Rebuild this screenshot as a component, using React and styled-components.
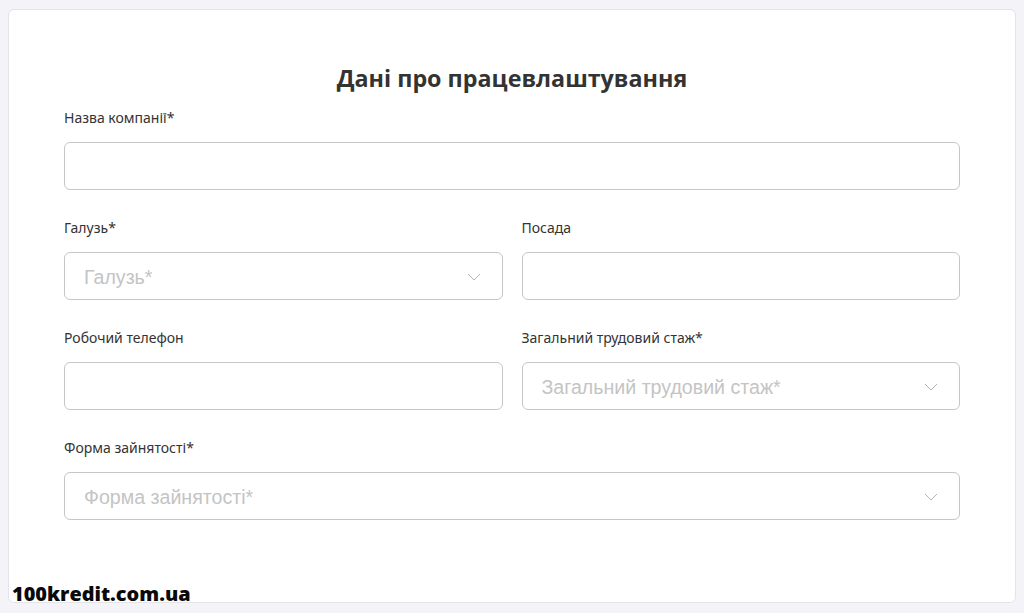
import React from "react";
import styled, { createGlobalStyle } from "styled-components";

const Global = createGlobalStyle`
  html, body { margin: 0; padding: 0; background: #f3f3f8; }
  * { box-sizing: border-box; }
`;

const Page = styled.div`
  position: relative;
  width: 1024px;
  height: 613px;
  padding: 9px 8px 10px 8px;
`;

const Card = styled.div`
  height: 594px;
  background: #ffffff;
  border: 1px solid #e3e3ea;
  border-radius: 6px;
  padding: 52px 55px 0 55px;
`;

const Title = styled.h2`
  margin: 0 0 14px 0;
  text-align: center;
  font-family: "Open Sans", "Noto Sans", sans-serif;
  font-weight: 700;
  font-size: 23.3px;
  line-height: 32px;
  color: #333333;
`;

const Grid = styled.div`
  display: grid;
  grid-template-columns: 1fr 1fr;
  column-gap: 19px;
  row-gap: 28px;
`;

const Field = styled.div`
  display: flex;
  flex-direction: column;
  grid-column: ${(p) => (p.$full ? "1 / -1" : "auto")};
`;

const Label = styled.label`
  font-family: "Noto Sans", sans-serif;
  font-size: 14px;
  line-height: 20px;
  color: #333333;
  margin-bottom: 14px;
`;

const Box = styled.div`
  height: 48px;
  border: 1px solid #c6c6c6;
  border-radius: 6px;
  display: flex;
  align-items: center;
  justify-content: space-between;
  padding: 2px 21px 0 19px;
  background: #fff;
`;

const Placeholder = styled.span`
  font-family: "Liberation Sans", Arial, sans-serif;
  font-size: 19.6px;
  color: #c4c4c4;
`;

const Mark = styled.div`
  position: absolute;
  left: 12px;
  bottom: 7px;
  font-family: "Open Sans", sans-serif;
  font-weight: 800;
  font-size: 19.9px;
  line-height: 24px;
  color: #0a0a0a;
`;

const Chevron = () => (
  <svg width="14" height="8" viewBox="0 0 14 8" fill="none">
    <path d="M1 1l6 6 6-6" stroke="#b3b3b3" strokeWidth="1" />
  </svg>
);

const Input = () => <Box />;
const Select = ({ placeholder }) => (
  <Box>
    <Placeholder>{placeholder}</Placeholder>
    <Chevron />
  </Box>
);

export default function App() {
  return (
    <>
      <Global />
      <Page>
        <Card>
          <Title>Дані про працевлаштування</Title>
          <Grid>
            <Field $full>
              <Label>Назва компанії*</Label>
              <Input />
            </Field>
            <Field>
              <Label>Галузь*</Label>
              <Select placeholder="Галузь*" />
            </Field>
            <Field>
              <Label>Посада</Label>
              <Input />
            </Field>
            <Field>
              <Label>Робочий телефон</Label>
              <Input />
            </Field>
            <Field>
              <Label>Загальний трудовий стаж*</Label>
              <Select placeholder="Загальний трудовий стаж*" />
            </Field>
            <Field $full>
              <Label>Форма зайнятості*</Label>
              <Select placeholder="Форма зайнятості*" />
            </Field>
          </Grid>
        </Card>
        <Mark>100kredit.com.ua</Mark>
      </Page>
    </>
  );
}
